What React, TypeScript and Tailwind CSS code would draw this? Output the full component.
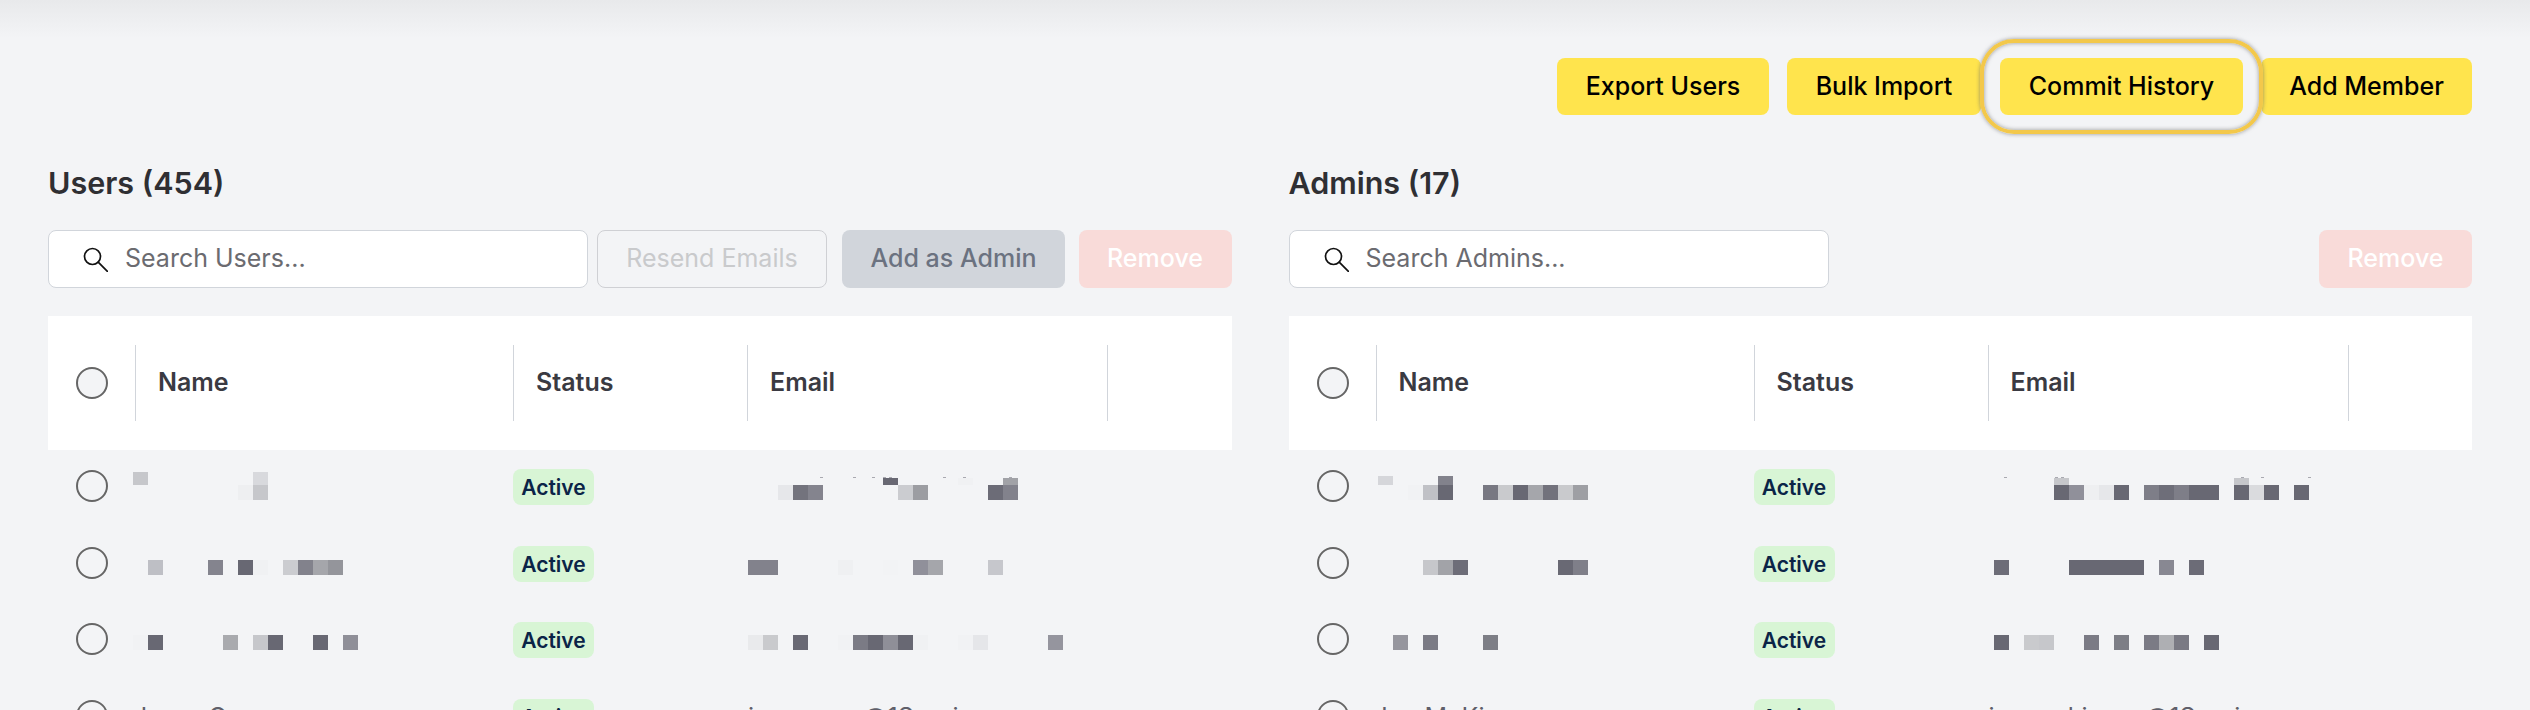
type Cell = [number, string];
type Band = { y: number; h: number; cells: Cell[] };
type Row = { height: string; name: Band[]; email: Band[]; specks?: number[]; nameText?: string; emailText?: string };

// dark / mid tones from the blurred-out names and emails
const D = "#686873";

const userRows: Row[] = [
  {
    height: "h-[77px]",
    name: [
      { y: 3, h: 13, cells: [[0, "#c6c7cb"], [8, "#d8d9dd"]] },
      { y: 16, h: 15, cells: [[7, "#eeeff1"], [8, "#c6c7cb"]] },
    ],
    email: [
      { y: 9, h: 7, cells: [[9, D], [14, "#f0f1f3"], [17, "#a1a2a7"]] },
      { y: 16, h: 15, cells: [[2, "#e6e7ea"], [3, "#73737d"], [4, "#84848e"], [10, "#cbccd0"], [11, "#9c9da2"], [16, "#6c6c77"], [17, "#82828c"]] },
    ],
    specks: [72, 105, 124, 135, 141, 195, 215, 261],
  },
  {
    height: "h-[76px]",
    name: [
      { y: 14, h: 15, cells: [[1, "#bebfc5"], [5, "#84848e"], [7, D], [8, "#f0f1f3"], [10, "#cbccd0"], [11, "#82828c"], [12, "#a5a6ab"], [13, "#94959b"]] },
    ],
    email: [
      { y: 14, h: 15, cells: [[0, "#82828c"], [1, "#82828c"], [6, "#eff0f2"], [9, "#f2f3f5"], [11, "#90909a"], [12, "#a5a6ab"], [16, "#c6c7cc"]] },
    ],
  },
  {
    height: "h-[77px]",
    name: [
      { y: 13, h: 15, cells: [[0, "#f1f2f4"], [1, D], [6, "#a9aaae"], [8, "#c6c7cb"], [9, D], [12, D], [14, "#8f8f98"]] },
    ],
    email: [
      { y: 13, h: 15, cells: [[0, "#e9eaec"], [1, "#c9cacd"], [3, "#696974"], [6, "#f1f2f4"], [7, "#7b7b85"], [8, D], [9, "#8f8f98"], [10, D], [11, "#f0f1f3"], [14, "#f1f2f4"], [15, "#e5e6e9"], [20, "#95959e"]] },
    ],
  },
  { height: "h-[77px]", name: [], email: [], nameText: "Jorge Osman", emailText: "jorgesosa@1Searing.com" },
];

const adminRows: Row[] = [
  {
    height: "h-[77px]",
    name: [
      { y: 7, h: 9, cells: [[0, "#d5d6da"], [4, "#82828c"]] },
      { y: 16, h: 15, cells: [[2, "#f1f2f4"], [3, "#c0c1c6"], [4, D], [7, "#787882"], [8, "#c9cacd"], [9, D], [10, "#a5a6ab"], [11, "#72727c"], [12, "#c9cacd"], [13, "#9e9fa4"]] },
    ],
    email: [
      { y: 9, h: 7, cells: [[4, "#c6c7cb"], [16, "#c6c7cb"]] },
      { y: 16, h: 15, cells: [[4, D], [5, "#90909a"], [6, "#eeeff1"], [7, "#e6e7ea"], [8, D], [10, "#7e7e88"], [11, "#6e6e79"], [12, "#7e7e88"], [13, D], [14, D], [16, D], [17, "#dadbde"], [18, D], [20, D]] },
    ],
    specks: [15, 66, 72, 252, 272, 319],
  },
  {
    height: "h-[76px]",
    name: [{ y: 14, h: 15, cells: [[3, "#c6c7cb"], [4, "#a2a3a8"], [5, "#6d6d78"], [12, "#696974"], [13, "#7f7f89"]] }],
    email: [{ y: 14, h: 15, cells: [[0, "#6d6d78"], [5, D], [6, D], [7, D], [8, D], [9, D], [11, "#888892"], [13, "#6c6c77"]] }],
  },
  {
    height: "h-[77px]",
    name: [{ y: 13, h: 15, cells: [[1, "#96969e"], [3, "#7b7b85"], [7, "#7d7e86"]] }],
    email: [{ y: 13, h: 15, cells: [[0, D], [2, "#c9cacd"], [3, "#c6c7cb"], [6, "#7b7b85"], [8, "#7d7e86"], [10, "#7b7b85"], [11, "#aeafb3"], [12, "#7a7a84"], [14, D]] }],
  },
  { height: "h-[77px]", name: [], email: [], nameText: "Jon McKinney", emailText: "jon.mckinney@1Searing.com" },
];

const SearchIcon = () => (
  <svg width="25" height="25" viewBox="0 0 25 25" fill="none" stroke="#111" strokeWidth="1.7" strokeLinecap="round" className="shrink-0">
    <circle cx="9.5" cy="9.5" r="8" />
    <line x1="15.2" y1="15.2" x2="24.4" y2="24.4" />
  </svg>
);

const Circle = ({ filled }: { filled?: boolean }) => (
  <span className={`block h-[32px] w-[32px] rounded-full border-2 border-[#666] ${filled ? "bg-[#f3f4f6]" : ""}`} />
);

// x offset lets a mosaic start a little right of where the text column starts
const Mosaic = ({ bands, dx, specks }: { bands: Band[]; dx: number; specks?: number[] }) => (
  <svg width="360" height="36" className="block overflow-visible" shapeRendering="crispEdges">
    {bands.map((b) =>
      b.cells.map(([k, c]) => <rect key={`${b.y}-${k}`} x={dx + k * 15} y={b.y} width="15" height={b.h} fill={c} />),
    )}
    {specks?.map((x) => <rect key={x} x={x} y={8} width="3" height="1" fill="#a9a9b0" />)}
  </svg>
);

const Panel = ({ title, placeholder, rows, isUsers }: { title: string; placeholder: string; rows: Row[]; isUsers: boolean }) => (
  <section>
    <h2 className="mt-[50px] mb-[29px] text-[30.5px] leading-[36px] font-semibold text-[#2f2f33]">{title}</h2>

    <div className="flex h-[58px] items-stretch text-[25px]">
      <label className="flex w-[540px] items-center gap-[17px] rounded-lg border border-[#d1d5db] bg-white pl-[34px]">
        <SearchIcon />
        <input placeholder={placeholder} className="w-full bg-transparent outline-none placeholder:text-[#6b6b70]" />
      </label>
      {isUsers ? (
        <>
          <button className="ml-[9px] w-[230px] rounded-lg border border-[#cfd0d4] text-[#c9cacc]">Resend Emails</button>
          <button className="ml-[15px] w-[223px] rounded-lg bg-[#d1d5db] font-medium text-[#6b7280]">Add as Admin</button>
        </>
      ) : null}
      <button className="ml-auto w-[153px] rounded-lg bg-[#f9dbd9] font-medium text-white">Remove</button>
    </div>

    <div className="mt-[28px] grid h-[134px] grid-cols-[87px_378px_234px_360px_1fr] items-center bg-white text-[25px] font-semibold text-[#3a3a42]">
      <div className="pl-[28px]"><Circle filled /></div>
      <div className="flex h-[76px] items-center border-l border-[#d1d5db] pl-[22px]">Name</div>
      <div className="flex h-[76px] items-center border-l border-[#d1d5db] pl-[22px]">Status</div>
      <div className="flex h-[76px] items-center border-l border-[#d1d5db] pl-[22px]">Email</div>
      <div className="h-[76px] border-l border-[#d1d5db]" />
    </div>

    {rows.map((row, i) => (
      <div key={i} className={`grid grid-cols-[85px_380px_235px_1fr] items-start pt-[19px] text-[25px] leading-[36px] text-[#5f5f6a] ${row.height}`}>
        <div className="pt-px pl-[28px]"><Circle /></div>
        <div>
          {row.nameText ? row.nameText : <Mosaic bands={row.name} dx={isUsers ? 0 : 4} />}
        </div>
        <div>
          <span className="block h-[36px] w-[81px] rounded-lg bg-[#d8f5d5] pt-px text-center text-[21px] font-semibold text-[#0b2447]">Active</span>
        </div>
        <div>
          {row.emailText ? row.emailText : <Mosaic bands={row.email} dx={isUsers ? 0 : 4.5} specks={row.specks} />}
        </div>
      </div>
    ))}
  </section>
);

export default function App() {
  return (
    <div className="relative h-[710px] overflow-hidden bg-[#f3f4f6] pt-[58px] pr-[58px] pl-[48px] font-['Inter',sans-serif] antialiased">
      <div className="pointer-events-none absolute inset-x-0 top-0 h-[38px] bg-gradient-to-b from-[#e8e9eb] to-transparent" />

      <div className="flex justify-end gap-[18px] text-[25px] font-medium text-black">
        <button className="h-[57px] w-[212px] rounded-lg bg-[#ffe44d]">Export Users</button>
        <button className="h-[57px] w-[194px] rounded-lg bg-[#ffe44d]">Bulk Import</button>
        <div className="relative ml-px">
          <button className="h-[57px] w-[243px] rounded-lg bg-[#ffe44d]">Commit History</button>
          <span className="pointer-events-none absolute -inset-x-[20px] -inset-y-[19px] rounded-[34px] border-4 border-[#f3c84b] shadow-[0_0_4px_#666666aa,inset_0_0_4px_#666666aa]" />
        </div>
        <button className="h-[57px] w-[211px] rounded-lg bg-[#ffe44d]">Add Member</button>
      </div>

      <div className="grid grid-cols-2 gap-x-[57px]">
        <Panel title="Users (454)" placeholder="Search Users..." rows={userRows} isUsers />
        <Panel title="Admins (17)" placeholder="Search Admins..." rows={adminRows} isUsers={false} />
      </div>
    </div>
  );
}
